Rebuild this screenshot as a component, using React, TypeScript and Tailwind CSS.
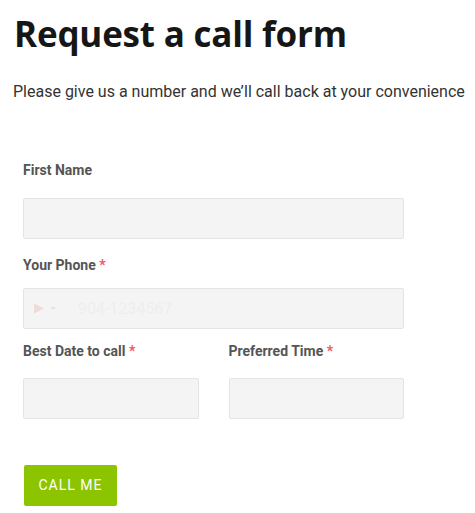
import React from 'react';

const Label: React.FC<{ text: string; required?: boolean }> = ({ text, required }) => (
  <div className="text-[14px] font-bold leading-[20px] text-[#555]">
    {text}
    {required && <span className="text-[#f0565a]"> *</span>}
  </div>
);

const Field: React.FC<{ placeholder?: string; flag?: boolean }> = ({ placeholder, flag }) => (
  <div className="flex h-[41px] items-center rounded-[2px] border border-[#e4e4e4] bg-[#f4f4f4] px-[10px]">
    {flag && (
      <div className="mr-[22px] flex items-center gap-[6px] opacity-15">
        <div className="h-[10px] w-[10px] bg-[#e05050] [clip-path:polygon(0_0,100%_50%,0_100%)]" />
        <div className="h-0 w-0 border-x-[3px] border-t-[3px] border-x-transparent border-t-[#888]" />
      </div>
    )}
    <span className="text-[16px] text-[#eeeeee]">{placeholder}</span>
  </div>
);

export default function App() {
  return (
    <div className="min-h-screen bg-white font-['Roboto',sans-serif]">
      <h1 className="pl-[14px] pt-[12px] font-['Open_Sans',sans-serif] text-[35px] font-bold leading-[44px] tracking-[-0.2px] text-[#161616]">
        Request a call form
      </h1>
      <p className="mt-[24px] pl-[13px] text-[16px] leading-[24px] text-[#333]">
        Please give us a number and we’ll call back at your convenience
      </p>

      <form className="ml-[23px] mt-[56px] w-[381px]">
        <Label text="First Name" />
        <div className="mt-[18px]">
          <Field />
        </div>

        <div className="mt-[16px]">
          <Label text="Your Phone" required />
        </div>
        <div className="mt-[13px]">
          <Field placeholder="904-1234567" flag />
        </div>

        <div className="mt-[12px] grid grid-cols-2 gap-[30px]">
          <div>
            <Label text="Best Date to call" required />
            <div className="mt-[17px]">
              <Field />
            </div>
          </div>
          <div>
            <Label text="Preferred Time" required />
            <div className="mt-[17px]">
              <Field />
            </div>
          </div>
        </div>

        <button
          type="button"
          className="mt-[46px] ml-[1px] h-[41px] w-[93px] rounded-[2px] bg-[#8cc400] text-[14px] font-normal tracking-[1px] text-white"
        >
          CALL ME
        </button>
      </form>
    </div>
  );
}
